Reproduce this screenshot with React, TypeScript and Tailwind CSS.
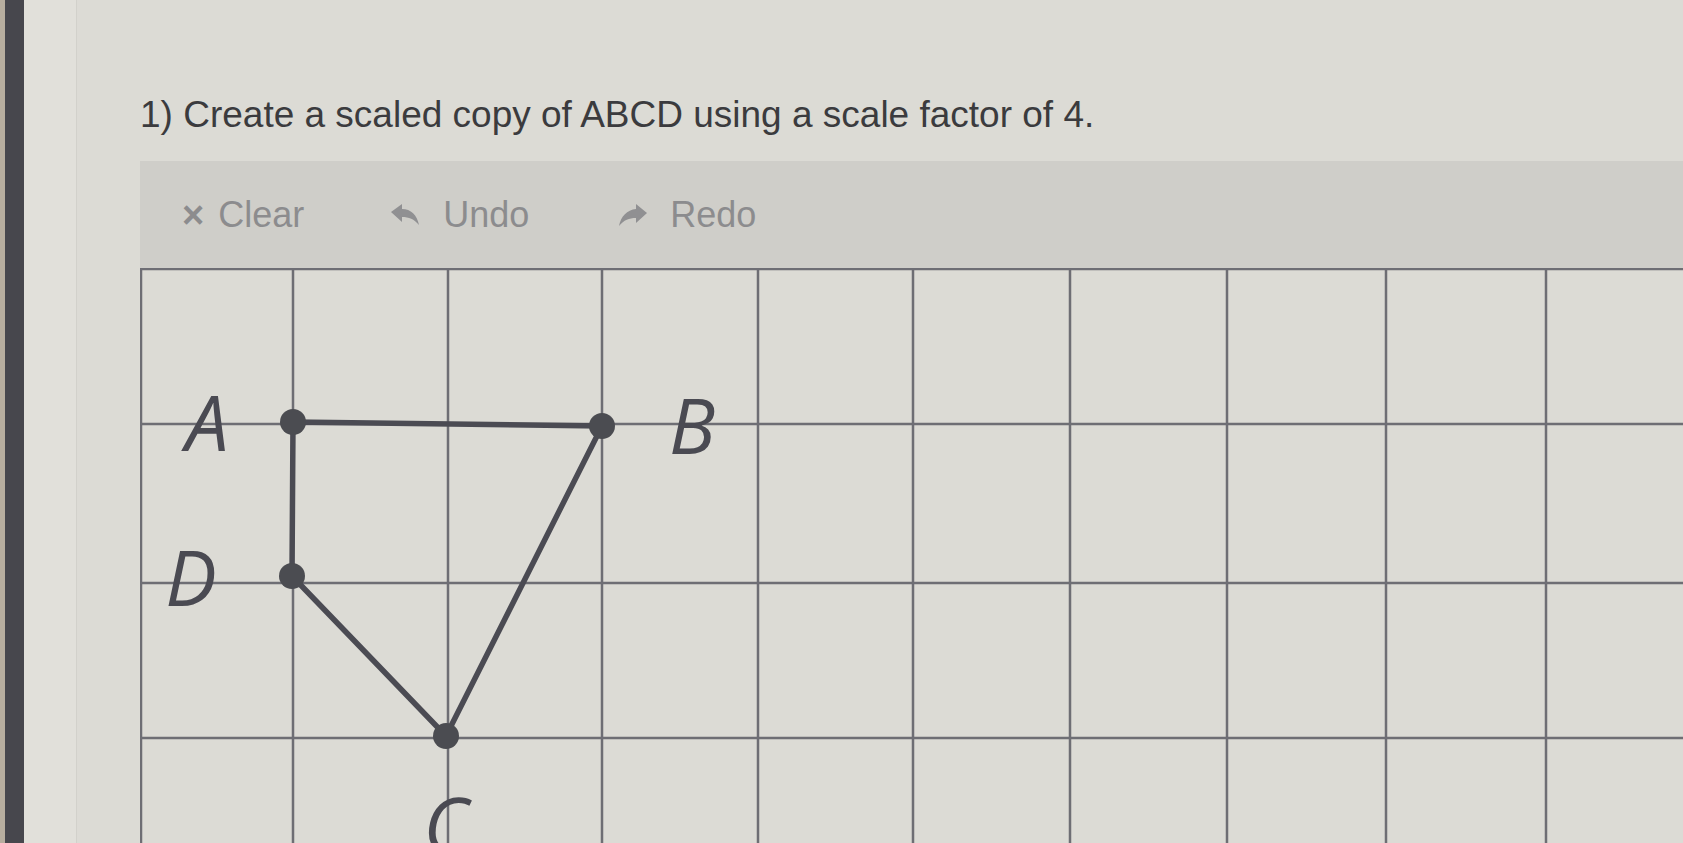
import React from 'react';

// grid line positions, relative to the board's top-left corner
const cols = [1, 153, 308, 462, 618, 773, 930, 1087, 1246, 1406];
const rows = [1, 156, 315, 470];

const pts = {
  A: [153, 154],
  B: [462, 158],
  D: [152, 308],
  C: [306, 468],
};

const labels: { t: string; x: number; y: number }[] = [
  { t: 'A', x: 67, y: 183 },
  { t: 'B', x: 552, y: 186 },
  { t: 'D', x: 51, y: 338 },
  { t: 'C', x: 306, y: 585 },
];

const UndoIcon = () => (
  <svg width={30} height={24} viewBox="0 0 30 24" className="text-[#909092]">
    <path d="M1 9 L12 1 L12 6 C21 6 27 12 29 22 C24 16 19 14 12 14 L12 19 Z" fill="currentColor" />
  </svg>
);

const RedoIcon = () => (
  <svg width={30} height={24} viewBox="0 0 30 24" className="text-[#909092]">
    <path d="M29 10 L18 1 L18 6 C9 7 3 13 1 23 C6 17 11 15 18 15 L18 20 Z" fill="currentColor" />
  </svg>
);

const Grid: React.FC = () => {
  const shape = [pts.A, pts.B, pts.C, pts.D, pts.A];
  return (
    <svg width={1543} height={575} className="block">
      {cols.map((x) => (
        <line key={'v' + x} x1={x} y1={0} x2={x} y2={575} stroke="#6e6e74" strokeWidth={2.5} />
      ))}
      {rows.map((y) => (
        <line key={'h' + y} x1={0} y1={y} x2={1543} y2={y} stroke="#6e6e74" strokeWidth={2.5} />
      ))}
      {labels.map((l) => (
        <text
          key={l.t}
          x={l.x}
          y={l.y}
          textAnchor="middle"
          fontSize={77}
          fontStyle="italic"
          fontFamily="'Open Sans', sans-serif"
          fill="#4a4a52"
        >
          {l.t}
        </text>
      ))}
      <polyline
        points={shape.map((p) => p.join(',')).join(' ')}
        fill="none"
        stroke="#4b4b53"
        strokeWidth={5.5}
        strokeLinejoin="round"
      />
      {Object.values(pts).map(([x, y]) => (
        <circle key={x + '-' + y} cx={x} cy={y} r={13} fill="#4b4c51" />
      ))}
    </svg>
  );
};

export default function App() {
  return (
    <div className="flex h-[843px] w-[1683px] overflow-hidden bg-[#dcdbd5] font-['Liberation_Sans',Arial,sans-serif]">
      <div className="w-[5px] shrink-0 bg-[#b7ae9f]" />
      <div className="w-[19px] shrink-0 bg-[#47474d]" />
      <div className="w-[53px] shrink-0 border-r border-[#d2d1cb] bg-[#e1e0da]" />
      <div className="flex min-w-0 flex-1 flex-col pl-[63px] pt-[94px]">
        <h1 className="text-[37px] leading-[42px] text-[#3b3b3e]">
          1) Create a scaled copy of ABCD using a scale factor of 4.
        </h1>
        <div className="mt-[25px] flex h-[107px] items-center bg-[#cfcec9] pl-[42px] text-[36px] text-[#8c8c8e]">
          <button className="flex items-center gap-[14px]">
            <span className="text-[38px] font-bold leading-none">×</span>
            <span>Clear</span>
          </button>
          <button className="ml-[86px] flex items-center gap-[23px]">
            <UndoIcon />
            <span>Undo</span>
          </button>
          <button className="ml-[89px] flex items-center gap-[22px]">
            <RedoIcon />
            <span>Redo</span>
          </button>
        </div>
        <Grid />
      </div>
    </div>
  );
}
